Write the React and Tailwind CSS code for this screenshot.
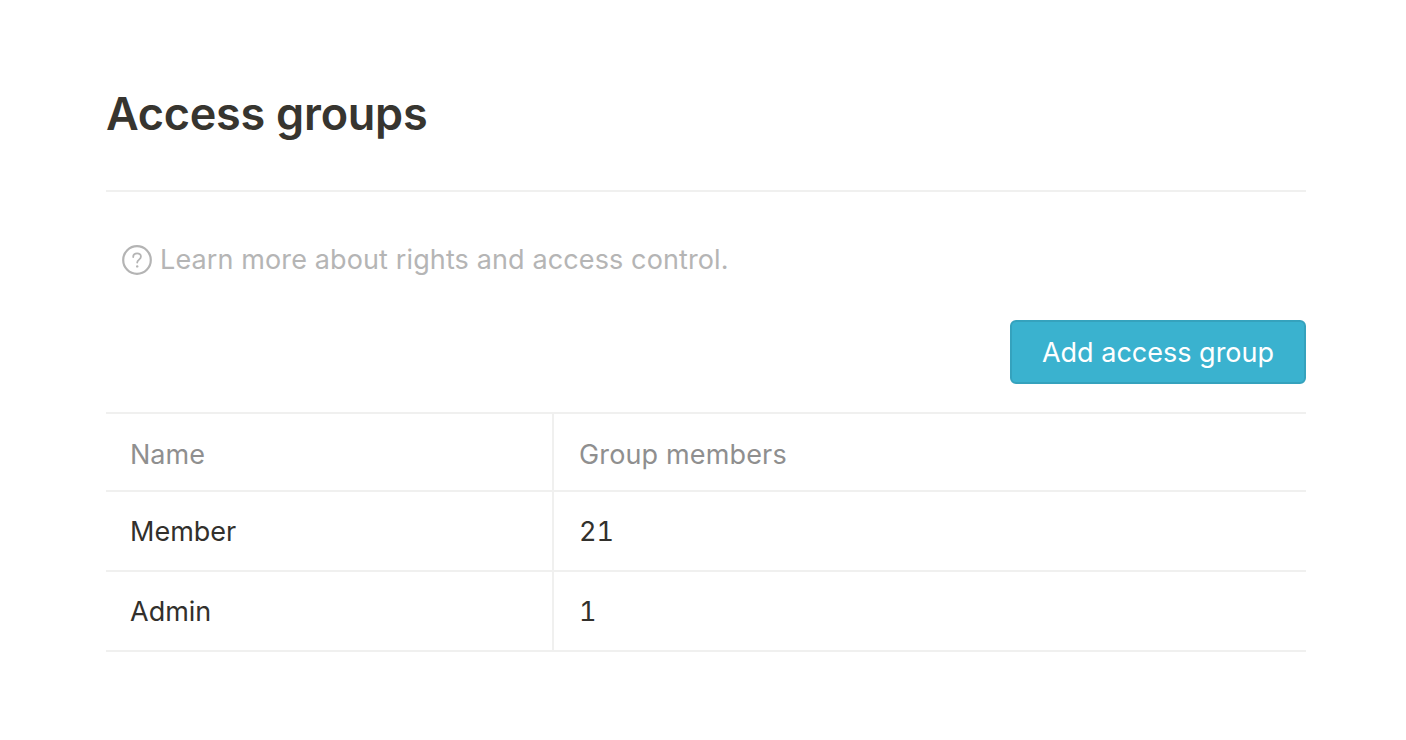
import React from 'react'

const rows = [
    { name: 'Member', count: '21' },
    { name: 'Admin', count: '1' },
]

function HelpIcon() {
    return (
        <svg width="30" height="30" viewBox="0 0 30 30" fill="none" className="shrink-0">
            <circle cx="15" cy="15" r="13.8" stroke="#b4b4b4" strokeWidth="2.2" />
            <path d="M11.2 12c0-2.2 1.7-3.6 3.9-3.6s3.8 1.4 3.8 3.3c0 2.8-3.7 3-3.7 5.9" stroke="#b4b4b4" strokeWidth="1.8" strokeLinecap="round" />
            <circle cx="15.2" cy="21.4" r="1.2" fill="#b4b4b4" />
        </svg>
    )
}

function App() {
    return (
        <div className="min-h-[740px] bg-white px-[106px] pt-[88px] font-['Inter',sans-serif]">
            <div className="w-[1200px]">
                <h1 className="h-[52px] text-[45px] leading-[52px] font-semibold tracking-[-0.25px] text-[#37352f]">Access groups</h1>

                <div className="mt-[50px] border-t-2 border-[#f0f0ef]"></div>

                <div className="mt-[52px] flex h-[32px] items-center gap-[8px] pl-[16px] text-[27px] leading-[32px] tracking-[0.12px] text-[#b5b5b5]">
                    <HelpIcon />
                    <span>Learn more about rights and access control.</span>
                </div>

                <div className="mt-[44px] flex justify-end">
                    <button className="h-[64px] w-[296px] rounded-[6px] border-2 border-[#35a2bd] bg-[#3ab2cf] pt-[2px] text-[27px] text-white">
                        Add access group
                    </button>
                </div>

                <table className="mt-[28px] w-full border-collapse text-[27px] leading-[32px]">
                    <thead>
                        <tr className="h-[78px] border-y-2 border-[#f0f0ef] text-left font-normal text-[#8f8f8f]">
                            <th className="w-[447px] border-r-2 border-[#f0f0ef] pt-[6px] pl-[24px] font-normal">Name</th>
                            <th className="pt-[6px] pl-[25px] font-normal tracking-[0.15px]">Group members</th>
                        </tr>
                    </thead>
                    <tbody>
                        {rows.map(r => (
                            <tr key={r.name} className="h-[80px] border-b-2 border-[#f0f0ef] text-[#32302c]">
                                <td className="border-r-2 border-[#f0f0ef] pt-[2px] pl-[24px]">{r.name}</td>
                                <td className="pt-[2px] pl-[25px] tabular-nums">{r.count}</td>
                            </tr>
                        ))}
                    </tbody>
                </table>
            </div>
        </div>
    )
}

export default App
